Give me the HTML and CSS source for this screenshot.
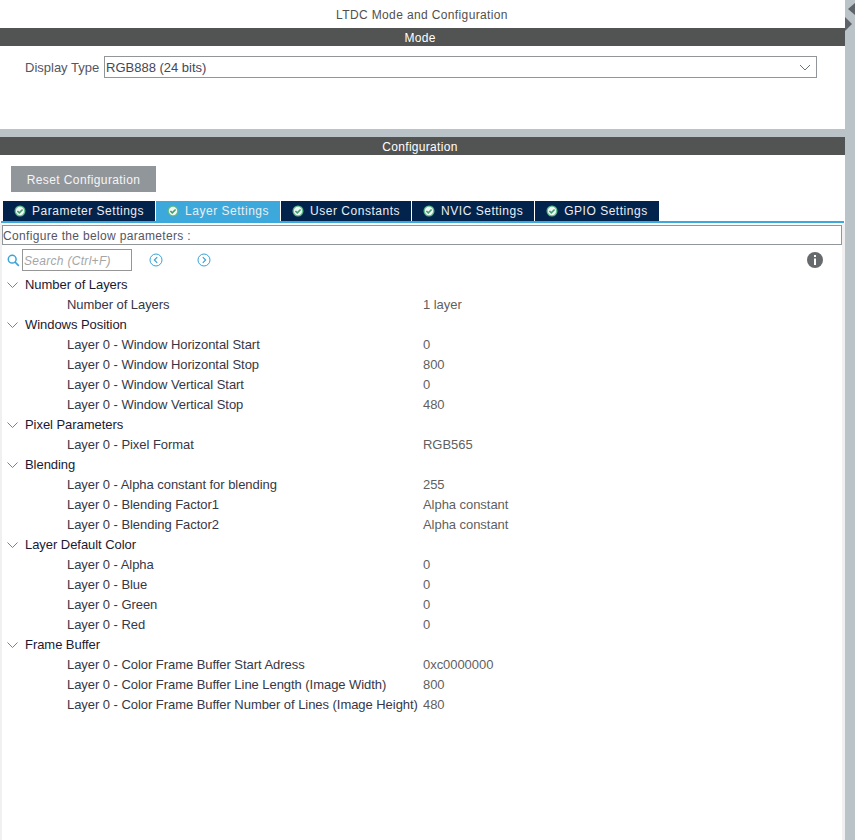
FILE: index.html
```html
<!doctype html>
<html>
<head>
<meta charset="utf-8">
<title>LTDC Mode and Configuration</title>
<link rel="stylesheet" href="styles.css">
</head>
<body>
<div id="main">
	<div id="pageTitle">LTDC Mode and Configuration</div>
	<div class="sectionBar">Mode</div>
	<div id="modePanel">
		<span id="displayTypeLabel">Display Type</span>
		<div id="displayTypeSelect">
			<span>RGB888 (24 bits)</span>
			<svg width="12" height="7" viewBox="0 0 12 7"><path d="M1 1l5 5 5-5" fill="none" stroke="#6d7478" stroke-width="1"/></svg>
		</div>
	</div>
	<div id="splitter"></div>
	<div class="sectionBar">Configuration</div>
	<div id="configPanel">
		<div id="resetButton">Reset Configuration</div>
		<div id="tabs">
			<div class="tab"><svg class="tabIcon" viewBox="0 0 12 12"><circle cx="6" cy="6" r="5.5" fill="#5cb88a"/><circle cx="6" cy="6" r="4.2" fill="#eef7f2"/><path d="M3.4 6l1.9 1.9 3.3-3.4" fill="none" stroke="#3f9e6c" stroke-width="1.6"/></svg>Parameter Settings</div>
			<div class="tab activeTab"><svg class="tabIcon" viewBox="0 0 12 12"><circle cx="6" cy="6" r="5.5" fill="#5cb88a"/><circle cx="6" cy="6" r="4.2" fill="#eef7f2"/><path d="M3.4 6l1.9 1.9 3.3-3.4" fill="none" stroke="#3f9e6c" stroke-width="1.6"/></svg>Layer Settings</div>
			<div class="tab"><svg class="tabIcon" viewBox="0 0 12 12"><circle cx="6" cy="6" r="5.5" fill="#5cb88a"/><circle cx="6" cy="6" r="4.2" fill="#eef7f2"/><path d="M3.4 6l1.9 1.9 3.3-3.4" fill="none" stroke="#3f9e6c" stroke-width="1.6"/></svg>User Constants</div>
			<div class="tab"><svg class="tabIcon" viewBox="0 0 12 12"><circle cx="6" cy="6" r="5.5" fill="#5cb88a"/><circle cx="6" cy="6" r="4.2" fill="#eef7f2"/><path d="M3.4 6l1.9 1.9 3.3-3.4" fill="none" stroke="#3f9e6c" stroke-width="1.6"/></svg>NVIC Settings</div>
			<div class="tab"><svg class="tabIcon" viewBox="0 0 12 12"><circle cx="6" cy="6" r="5.5" fill="#5cb88a"/><circle cx="6" cy="6" r="4.2" fill="#eef7f2"/><path d="M3.4 6l1.9 1.9 3.3-3.4" fill="none" stroke="#3f9e6c" stroke-width="1.6"/></svg>GPIO Settings</div>
		</div>
		<div id="tabLine"></div>
		<div id="tabBody">
			<div id="hintBox">Configure the below parameters :</div>
			<div id="searchRow">
				<svg id="searchIcon" width="13" height="13" viewBox="0 0 13 13"><circle cx="5.2" cy="5.2" r="3.9" fill="none" stroke="#3aa3d8" stroke-width="1.5"/><path d="M8 8l3.8 3.8" stroke="#3aa3d8" stroke-width="1.7"/></svg>
				<div id="searchBox">Search (Ctrl+F)</div>
				<svg class="navIcon" width="14" height="14" viewBox="0 0 14 14"><circle cx="7" cy="7" r="6" fill="none" stroke="#3aa3d8"/><path d="M8.2 4.2L5.4 7l2.8 2.8" fill="none" stroke="#3aa3d8" stroke-width="1.2"/></svg>
				<svg class="navIcon" width="14" height="14" viewBox="0 0 14 14"><circle cx="7" cy="7" r="6" fill="none" stroke="#3aa3d8"/><path d="M5.8 4.2L8.6 7l-2.8 2.8" fill="none" stroke="#3aa3d8" stroke-width="1.2"/></svg>
				<svg id="infoIcon" width="16" height="16" viewBox="0 0 16 16"><circle cx="8" cy="8" r="8" fill="#666a6d"/><rect x="7" y="3" width="2" height="2" fill="#fff"/><rect x="7" y="6.5" width="2" height="6.5" fill="#fff"/></svg>
			</div>
			<div id="tree">
				<div class="groupRow"><svg class="chevron" width="11" height="6" viewBox="0 0 11 6"><path d="M.5.5l5 5 5-5" fill="none" stroke="#7a8084"/></svg>Number of Layers</div>
				<div class="paramRow"><span class="paramName">Number of Layers</span><span class="paramValue">1 layer</span></div>
				<div class="groupRow"><svg class="chevron" width="11" height="6" viewBox="0 0 11 6"><path d="M.5.5l5 5 5-5" fill="none" stroke="#7a8084"/></svg>Windows Position</div>
				<div class="paramRow"><span class="paramName">Layer 0 - Window Horizontal Start</span><span class="paramValue">0</span></div>
				<div class="paramRow"><span class="paramName">Layer 0 - Window Horizontal Stop</span><span class="paramValue">800</span></div>
				<div class="paramRow"><span class="paramName">Layer 0 - Window Vertical Start</span><span class="paramValue">0</span></div>
				<div class="paramRow"><span class="paramName">Layer 0 - Window Vertical Stop</span><span class="paramValue">480</span></div>
				<div class="groupRow"><svg class="chevron" width="11" height="6" viewBox="0 0 11 6"><path d="M.5.5l5 5 5-5" fill="none" stroke="#7a8084"/></svg>Pixel Parameters</div>
				<div class="paramRow"><span class="paramName">Layer 0 - Pixel Format</span><span class="paramValue">RGB565</span></div>
				<div class="groupRow"><svg class="chevron" width="11" height="6" viewBox="0 0 11 6"><path d="M.5.5l5 5 5-5" fill="none" stroke="#7a8084"/></svg>Blending</div>
				<div class="paramRow"><span class="paramName">Layer 0 - Alpha constant for blending</span><span class="paramValue">255</span></div>
				<div class="paramRow"><span class="paramName">Layer 0 - Blending Factor1</span><span class="paramValue">Alpha constant</span></div>
				<div class="paramRow"><span class="paramName">Layer 0 - Blending Factor2</span><span class="paramValue">Alpha constant</span></div>
				<div class="groupRow"><svg class="chevron" width="11" height="6" viewBox="0 0 11 6"><path d="M.5.5l5 5 5-5" fill="none" stroke="#7a8084"/></svg>Layer Default Color</div>
				<div class="paramRow"><span class="paramName">Layer 0 - Alpha</span><span class="paramValue">0</span></div>
				<div class="paramRow"><span class="paramName">Layer 0 - Blue</span><span class="paramValue">0</span></div>
				<div class="paramRow"><span class="paramName">Layer 0 - Green</span><span class="paramValue">0</span></div>
				<div class="paramRow"><span class="paramName">Layer 0 - Red</span><span class="paramValue">0</span></div>
				<div class="groupRow"><svg class="chevron" width="11" height="6" viewBox="0 0 11 6"><path d="M.5.5l5 5 5-5" fill="none" stroke="#7a8084"/></svg>Frame Buffer</div>
				<div class="paramRow"><span class="paramName">Layer 0 - Color Frame Buffer Start Adress</span><span class="paramValue">0xc0000000</span></div>
				<div class="paramRow"><span class="paramName">Layer 0 - Color Frame Buffer Line Length (Image Width)</span><span class="paramValue">800</span></div>
				<div class="paramRow"><span class="paramName">Layer 0 - Color Frame Buffer Number of Lines (Image Height)</span><span class="paramValue">480</span></div>
			</div>
		</div>
	</div>
</div>
<div id="sideBar">
	<svg width="10" height="42" viewBox="0 0 10 42"><path d="M10 3v12L3 9z" fill="#5f6468"/><path d="M0 17l7 7-7 7z" fill="#5f6468"/></svg>
</div>
</body>
</html>
```

FILE: styles.css
```css
html, body {
	height: 100%;
}

body {
	margin: 0;
	display: flex;
	height: 840px;
	overflow: hidden;
	font-family: "Liberation Sans", sans-serif;
	font-size: 12px;
	background-color: rgb(255,255,255);
	color: rgb(70,70,70);
}

#main {
	flex: 1;
	display: flex;
	flex-direction: column;
	min-width: 0;
}

#sideBar {
	width: 10px;
	background-color: rgb(185,195,200);
}

#sideBar svg {
	display: block;
}

#pageTitle {
	height: 28px;
	line-height: 30px;
	text-align: center;
	letter-spacing: 0.37px;
	padding-right: 1px;
	color: rgb(80,80,80);
}

.sectionBar {
	height: 18px;
	line-height: 20px;
	text-align: center;
	letter-spacing: 0.3px;
	padding-right: 5px;
	color: rgb(255,255,255);
	background-color: rgb(82,84,83);
}

#modePanel {
	height: 83px;
	display: flex;
	align-items: flex-start;
	padding-top: 10px;
	padding-left: 25px;
	box-sizing: border-box;
	font-size: 13px;
}

#displayTypeLabel {
	width: 79px;
	line-height: 23px;
	color: rgb(85,85,100);
}

#displayTypeSelect {
	width: 713px;
	height: 22px;
	box-sizing: border-box;
	border: 1px solid rgb(145,150,155);
	display: flex;
	align-items: center;
	justify-content: space-between;
	padding: 0 5px 0 1px;
	color: rgb(70,70,85);
}

#splitter {
	height: 8px;
	background-color: rgb(185,195,200);
}

#configPanel {
	flex: 1;
	display: flex;
	flex-direction: column;
	min-height: 0;
}

#resetButton {
	margin-top: 11px;
	margin-left: 11px;
	width: 145px;
	height: 26px;
	line-height: 28px;
	text-align: center;
	letter-spacing: 0.4px;
	color: rgb(245,245,245);
	background-color: rgb(145,150,155);
}

#tabs {
	display: flex;
	gap: 1px;
	margin-top: 9px;
	margin-left: 3px;
}

.tab {
	height: 20px;
	line-height: 20px;
	padding: 0 11px;
	display: flex;
	align-items: center;
	letter-spacing: 0.52px;
	color: rgb(235,238,242);
	background-color: rgb(2,35,75);
}

.activeTab {
	background-color: rgb(60,168,219);
}

.tabIcon {
	width: 12px;
	height: 12px;
	margin-right: 6px;
}

#tabLine {
	height: 2px;
	margin-left: 1px;
	margin-right: 1px;
	background-color: rgb(60,168,219);
}

#tabBody {
	flex: 1;
	border-left: 2px solid rgb(240,240,240);
	border-right: 3px solid rgb(240,240,240);
	background-color: rgb(255,255,255);
}

#hintBox {
	margin-top: 2px;
	height: 20px;
	line-height: 20px;
	box-sizing: border-box;
	border: 1px solid rgb(145,150,155);
	letter-spacing: 0.33px;
	color: rgb(85,85,100);
}

#searchRow {
	display: flex;
	align-items: center;
	height: 22px;
	margin-top: 4px;
	padding-left: 5px;
	padding-right: 19px;
}

#searchIcon {
	margin-right: 2px;
}

#searchBox {
	width: 110px;
	height: 22px;
	line-height: 22px;
	box-sizing: border-box;
	border: 1px solid rgb(150,150,150);
	padding-left: 1px;
	font-style: italic;
	letter-spacing: 0.3px;
	color: rgb(165,165,165);
}

.navIcon {
	margin-left: 17px;
	margin-right: 17px;
}

#infoIcon {
	margin-left: auto;
}

#tree {
	margin-top: 4px;
	font-size: 13px;
	letter-spacing: -0.05px;
}

.groupRow {
	height: 20px;
	line-height: 20px;
	display: flex;
	align-items: center;
	color: rgb(25,25,50);
}

.chevron {
	margin-left: 5px;
	margin-right: 7px;
}

.paramRow {
	height: 20px;
	line-height: 20px;
	display: flex;
	padding-left: 65px;
	color: rgb(55,55,70);
}

.paramName {
	width: 356px;
	flex: none;
}

.paramValue {
	color: rgb(95,95,95);
}
```
